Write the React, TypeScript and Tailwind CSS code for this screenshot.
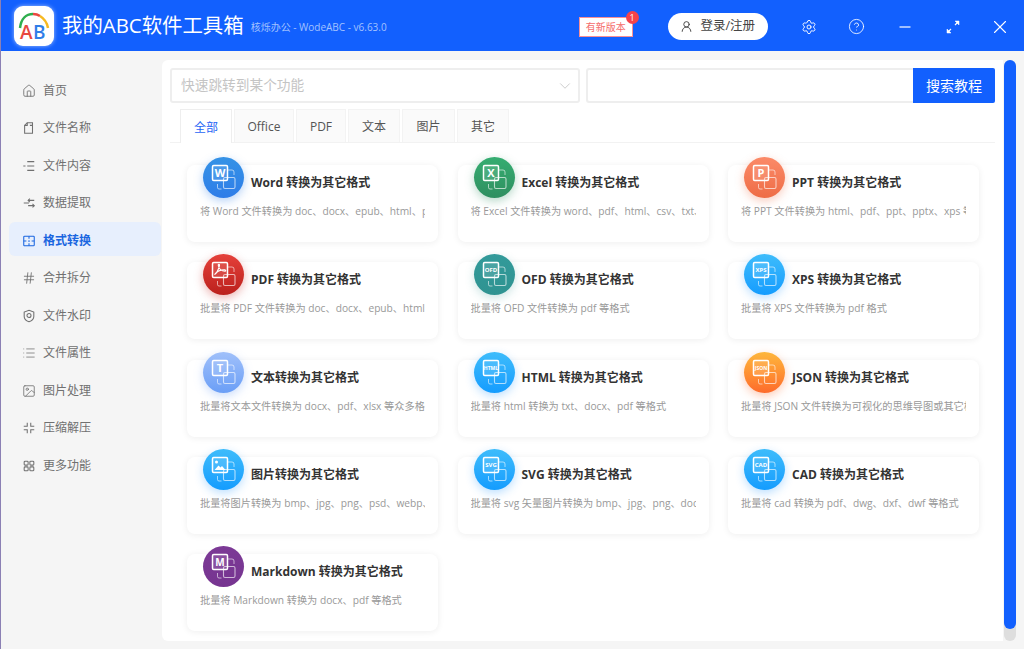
import { CircleHelp, Hash, House, Image, List, Settings, UserRound, X, ChevronDown } from "lucide-react";
import type { ReactNode } from "react";

const FONT = "font-['Open_Sans','Noto_Sans_CJK_SC',sans-serif]";

function Glyph({ children }: { children: ReactNode }) {
  return (
    <svg viewBox="0 0 16 16" fill="none" stroke="currentColor" strokeWidth="1.2" className="h-[14px] w-[14px]">
      {children}
    </svg>
  );
}

const NAV: { label: string; icon: ReactNode; active?: boolean }[] = [
  { label: "首页", icon: <House size={14} strokeWidth={1.5} /> },
  {
    label: "文件名称",
    icon: (
      <Glyph>
        <path d="M3 5v9h9V2H6L3 5z" />
        <path d="M6 2v3H3M9 5h3" />
      </Glyph>
    ),
  },
  {
    label: "文件内容",
    icon: (
      <Glyph>
        <path d="M6 3h8M6 8h8M6 13h8M1.500 8H4" />
      </Glyph>
    ),
  },
  {
    label: "数据提取",
    icon: (
      <Glyph>
        <path d="M7 5h7M7 11h7M2 8h6" />
        <path d="M9 3l-2 2 2 2M12 9l2 2-2 2" />
      </Glyph>
    ),
  },
  {
    label: "格式转换",
    active: true,
    icon: (
      <Glyph>
        <rect x="2" y="2.500" width="12" height="11" rx="1" />
        <path d="M8 2.500v3M8 7v2M8 10.500v3M2 8h3M11 8h3" />
      </Glyph>
    ),
  },
  { label: "合并拆分", icon: <Hash size={14} strokeWidth={1.5} /> },
  {
    label: "文件水印",
    icon: (
      <Glyph>
        <path d="M8 1.500l5.500 2v5c0 3-2.500 5-5.500 6-3-1-5.500-3-5.500-6v-5L8 1.500z" />
        <circle cx="8" cy="7.500" r="2.300" />
      </Glyph>
    ),
  },
  { label: "文件属性", icon: <List size={14} strokeWidth={1.3} /> },
  { label: "图片处理", icon: <Image size={14} strokeWidth={1.4} /> },
  {
    label: "压缩解压",
    icon: (
      <Glyph>
        <path d="M6 2v4H2M10 2v4h4M6 14v-4H2M10 14v-4h4" />
      </Glyph>
    ),
  },
  {
    label: "更多功能",
    icon: (
      <Glyph>
        <rect x="2.500" y="2.500" width="4.500" height="4.500" rx="1" />
        <rect x="9" y="2.500" width="4.500" height="4.500" rx="1" />
        <rect x="2.500" y="9" width="4.500" height="4.500" rx="1" />
        <rect x="9" y="9" width="4.500" height="4.500" rx="1" />
      </Glyph>
    ),
  },
];

const TABS = [
  { label: "全部", width: "w-[52px]", active: true },
  { label: "Office", width: "w-[60px]" },
  { label: "PDF", width: "w-[50px]" },
  { label: "文本", width: "w-[52px]" },
  { label: "图片", width: "w-[53px]" },
  { label: "其它", width: "w-[52px]" },
];

const BLUE = "bg-linear-to-b from-[#3dbcfb] to-[#139cfe] shadow-[0_3px_10px_rgba(30,150,254,0.3)]";

const CARDS: { title: string; desc: string; mark: string; size: number; bg: string }[] = [
  { title: "Word 转换为其它格式", desc: "将 Word 文件转换为 doc、docx、epub、html、pdf、xlsx", mark: "W", size: 11, bg: "bg-linear-to-b from-[#3592e6] to-[#2f7de8] shadow-[0_3px_10px_rgba(47,125,232,0.35)]" },
  { title: "Excel 转换为其它格式", desc: "将 Excel 文件转换为 word、pdf、html、csv、txt、xlsx", mark: "X", size: 11, bg: "bg-linear-to-b from-[#35ad71] to-[#2f8f60] shadow-[0_3px_10px_rgba(47,143,96,0.35)]" },
  { title: "PPT 转换为其它格式", desc: "将 PPT 文件转换为 html、pdf、ppt、pptx、xps 等格式", mark: "P", size: 11, bg: "bg-linear-to-b from-[#fb8a68] to-[#ee6c45] shadow-[0_3px_10px_rgba(238,108,69,0.35)]" },
  { title: "PDF 转换为其它格式", desc: "批量将 PDF 文件转换为 doc、docx、epub、html、xlsx", mark: "acrobat", size: 0, bg: "bg-linear-to-b from-[#e5403a] to-[#bb201c] shadow-[0_3px_10px_rgba(200,40,35,0.35)]" },
  { title: "OFD 转换为其它格式", desc: "批量将 OFD 文件转换为 pdf 等格式", mark: "OFD", size: 6, bg: "bg-linear-to-b from-[#329a9a] to-[#2f9391] shadow-[0_3px_10px_rgba(47,147,145,0.25)]" },
  { title: "XPS 转换为其它格式", desc: "批量将 XPS 文件转换为 pdf 格式", mark: "XPS", size: 6, bg: BLUE },
  { title: "文本转换为其它格式", desc: "批量将文本文件转换为 docx、pdf、xlsx 等众多格式", mark: "T", size: 11, bg: "bg-linear-to-b from-[#a0c0fa] to-[#6a9ef6] shadow-[0_3px_10px_rgba(106,158,246,0.35)]" },
  { title: "HTML 转换为其它格式", desc: "批量将 html 转换为 txt、docx、pdf 等格式", mark: "HTML", size: 5, bg: BLUE },
  { title: "JSON 转换为其它格式", desc: "批量将 JSON 文件转换为可视化的思维导图或其它格式", mark: "JSON", size: 5, bg: "bg-linear-to-b from-[#fdb63c] to-[#fd6a2b] shadow-[0_3px_10px_rgba(253,106,43,0.35)]" },
  { title: "图片转换为其它格式", desc: "批量将图片转换为 bmp、jpg、png、psd、webp、heic", mark: "image", size: 0, bg: BLUE },
  { title: "SVG 转换为其它格式", desc: "批量将 svg 矢量图片转换为 bmp、jpg、png、docx", mark: "SVG", size: 6, bg: BLUE },
  { title: "CAD 转换为其它格式", desc: "批量将 cad 转换为 pdf、dwg、dxf、dwf 等格式", mark: "CAD", size: 6, bg: BLUE },
  { title: "Markdown 转换为其它格式", desc: "批量将 Markdown 转换为 docx、pdf 等格式", mark: "M", size: 10, bg: "bg-linear-to-b from-[#7c3a96] to-[#763490]" },
];

function Mark({ mark, size }: { mark: string; size: number }) {
  if (mark === "image") {
    return (
      <>
        <circle cx="13.500" cy="13" r="1.500" fill="#fff" />
        <path d="M11.500 21l4-4.500 2 2 1.500-1.500 3.500 4z" fill="#fff" />
      </>
    );
  }
  if (mark === "acrobat") {
    return (
      <path
        d="M11.500 20.500c2.500-1.500 4-5 5-9 .3-1.500-1.500-1.500-1.200 0 .6 3 3.200 5.500 6.700 5.700 1 0 1-1.300 0-1.300-3.500-.2-8 1.400-10.500 4.600z"
        stroke="#fff"
        strokeWidth="1.100"
      />
    );
  }
  return (
    <text x="17" y={16 + size * 0.37} textAnchor="middle" fontSize={size} fontWeight="700" fill="#fff" fontFamily="Open Sans, sans-serif">
      {mark}
    </text>
  );
}

function FormatIcon({ mark, size, bg }: { mark: string; size: number; bg: string }) {
  return (
    <div className={`h-[41px] w-[41px] shrink-0 rounded-full ${bg}`}>
      <svg viewBox="0 0 41 41" fill="none" className="h-full w-full">
        <rect x="20.500" y="20.500" width="11.500" height="11" rx="1.500" stroke="#fff" strokeOpacity="0.65" strokeWidth="1.100" />
        <path d="M24.500 13h4.500a2 2 0 0 1 2 2v3M18.500 32h-2.500a1.500 1.500 0 0 1-1.500-1.500V27" stroke="#fff" strokeOpacity="0.65" strokeWidth="0.900" />
        <rect x="9.500" y="8.500" width="15" height="15" rx="1.200" fill="#fff" fillOpacity="0.12" stroke="#fff" strokeWidth="1.500" />
        <Mark mark={mark} size={size} />
      </svg>
    </div>
  );
}

function Card({ title, desc, mark, size, bg }: (typeof CARDS)[number]) {
  return (
    <div className="h-[77px] w-[251px] rounded-[8px] bg-white px-[13px] shadow-[0_1px_7px_rgba(0,0,0,0.07)]">
      <div className="-mt-[8px] ml-[3px] flex items-start gap-[7px]">
        <FormatIcon mark={mark} size={size} bg={bg} />
        <span className="mt-[17px] whitespace-nowrap text-[12px] font-bold leading-[18px] text-[#333]">{title}</span>
      </div>
      <div className="mt-[5px] overflow-hidden whitespace-nowrap text-[10.200px] leading-[16px] text-[#999]">{desc}</div>
    </div>
  );
}

function Logo() {
  return (
    <div className="h-[40px] w-[40px] rounded-[9px] bg-white shadow-[0_0_4px_rgba(255,255,255,0.6)]">
      <svg viewBox="0 0 40 40" className="h-full w-full" fill="none">
        <path d="M6 22C7 13 12 8 19 8" stroke="#2fae4e" strokeWidth="2.500" />
        <path d="M19 8c3 0 5 .6 7 2" stroke="#e8483f" strokeWidth="2.500" />
        <path d="M26 10c4 2.500 7 6 8 12" stroke="#f6b921" strokeWidth="2.500" />
        <text x="6" y="33" fontSize="19" fontWeight="600" fill="#e8483f" fontFamily="Open Sans, sans-serif">A</text>
        <text x="19" y="33" fontSize="19" fontWeight="600" fill="#2f7de8" fontFamily="Open Sans, sans-serif">B</text>
      </svg>
    </div>
  );
}

function Header() {
  return (
    <header className="flex h-[51px] shrink-0 items-center bg-[#1260fe] pl-[13px] text-white">
      <Logo />
      <span className="ml-[8px] whitespace-nowrap text-[20.400px]">我的ABC软件工具箱</span>
      <span className="ml-[7px] mt-[4px] whitespace-nowrap text-[10px] text-[#a3c2ff]">核烁办公 - WodeABC - v6.63.0</span>
      <div className="relative ml-[192px] mt-[3px] flex h-[20px] w-[54px] items-center justify-center border border-[#f78f96] bg-white text-[10px] text-[#f56c6c]">
        有新版本
        <span className="absolute -right-[7px] -top-[7px] flex h-[13px] w-[13px] items-center justify-center rounded-full bg-[#f5434a] text-[9px] text-white">1</span>
      </div>
      <button className="ml-[35px] mt-[2px] flex h-[27px] w-[100px] items-center justify-center gap-[7px] rounded-full bg-white text-[12.500px] text-[#444]">
        <UserRound size={13} strokeWidth={1.6} className="text-[#333]" />
        登录/注册
      </button>
      <Settings size={16} strokeWidth={1.4} className="ml-[33px] mt-[2px]" />
      <CircleHelp size={17} strokeWidth={1.2} className="ml-[31px] mt-[2px]" />
      <svg viewBox="0 0 14 14" className="ml-[33px] mt-[2px] h-[14px] w-[14px]" stroke="#fff" strokeWidth="1.200">
        <path d="M1.500 7h11" />
      </svg>
      <svg viewBox="0 0 14 14" className="ml-[34px] mt-[2px] h-[14px] w-[14px]" fill="#fff" stroke="#fff" strokeWidth="1.200">
        <path d="M1.500 12.500l3.500-3.500M9 5l3.500-3.500" />
        <path d="M9 1h4v4zM1 9v4h4z" strokeWidth="0.500" />
      </svg>
      <X size={22} strokeWidth={1.2} className="ml-[29px] mt-[2px]" />
    </header>
  );
}

function Sidebar() {
  return (
    <aside className="flex w-[161px] shrink-0 flex-col gap-[3.500px] pl-[8px] pt-[22.500px]">
      {NAV.map((item) => (
        <div
          key={item.label}
          className={
            item.active
              ? "-mt-[1.500px] mb-[1.500px] flex h-[34px] w-[152px] items-center gap-[7px] rounded-[6px] bg-[#e7effd] pl-[13px] pt-[3px] text-[12px] font-semibold text-[#1a66e0]"
              : "flex h-[34px] w-[152px] items-center gap-[7px] pl-[13px] text-[12px] text-[#707070]"
          }
        >
          {item.icon}
          {item.label}
        </div>
      ))}
    </aside>
  );
}

function SearchBar() {
  return (
    <div className="flex gap-[6px] pl-[8px]">
      <div className="flex h-[35px] w-[410px] items-center justify-between rounded-[3px] border-2 border-[#eee] pl-[9px] pr-[4px] text-[13.700px] text-[#c4c4c4]">
        快速跳转到某个功能
        <ChevronDown size={18} strokeWidth={1} className="text-[#bbb]" />
      </div>
      <div className="flex h-[35px] w-[409px] rounded-[3px] border-2 border-r-0 border-[#eee]">
        <div className="flex-1" />
        <button className="-my-[2px] h-[35px] w-[82px] rounded-r-[2px] bg-[#1260fe] text-[14px] text-white">搜索教程</button>
      </div>
    </div>
  );
}

function Tabs() {
  return (
    <div className="ml-[8px] mt-[6px] flex h-[34px] w-[825px] gap-[2px] border-b border-[#f2f2f2] pl-[10px]">
      {TABS.map((tab) => (
        <div
          key={tab.label}
          className={
            tab.active
              ? `${tab.width} flex h-[34px] items-center justify-center border border-b-0 border-[#eee] bg-white pt-[2px] text-[12px] text-[#1f66f5]`
              : `${tab.width} flex h-[33px] items-center justify-center border border-b-0 border-[#f3f3f3] bg-[#fafafa] pt-[2px] text-[12px] text-[#555]`
          }
        >
          {tab.label}
        </div>
      ))}
    </div>
  );
}

export default function App() {
  return (
    <div className={`flex h-[649px] w-[1024px] flex-col overflow-hidden border-l border-[#8b80b4] bg-[#f5f5f5] ${FONT}`}>
      <Header />
      <div className="flex min-h-0 flex-1">
        <Sidebar />
        <main className="mt-[9px] h-[581px] w-[841px] rounded-l-[6px] bg-white pt-[8px]">
          <SearchBar />
          <Tabs />
          <div className="ml-[25px] mt-[22px] grid grid-cols-[251px_251px_251px] gap-x-[19.500px] gap-y-[20.300px]">
            {CARDS.map((card) => (
              <Card key={card.title} {...card} />
            ))}
          </div>
        </main>
        <div className="ml-[1px] mt-[9px] h-[581px] w-[12px] rounded-full bg-[#dedede]">
          <div className="h-[569px] rounded-full bg-[#1260fe]" />
        </div>
      </div>
    </div>
  );
}
